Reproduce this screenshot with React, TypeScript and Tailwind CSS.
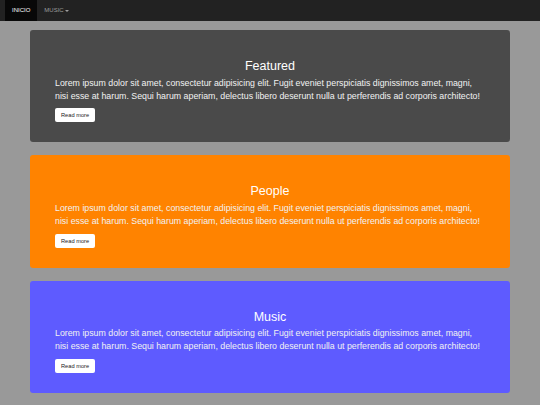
interface PanelProps {
  title: string
  className: string
}

function Panel({ title, className }: PanelProps) {
  return (
    <section className={`flex flex-col items-start rounded-[3px] px-[25px] pt-[30px] pb-[20px] ${className}`}>
      <h2 className="w-full text-center text-[12.5px] leading-[1.1] text-white">{title}</h2>
      <p className="mt-[3px] whitespace-nowrap text-[8.8px] leading-[13px] text-[#f2f2f2]">
        Lorem ipsum dolor sit amet, consectetur adipisicing elit. Fugit eveniet perspiciatis dignissimos amet, magni,
        <br />
        nisi esse at harum. Sequi harum aperiam, delectus libero deserunt nulla ut perferendis ad corporis architecto!
      </p>
      <button className="mt-[5.5px] block h-[14px] rounded-[2px] bg-white px-[6px] text-[5.7px] leading-[14px] text-[#222]">
        Read more
      </button>
    </section>
  )
}

export default function App() {
  return (
    <div
      className="min-h-[405px] bg-[#999999]"
      style={{ fontFamily: '"Liberation Sans", Arial, sans-serif' }}
    >
      <nav className="flex h-[21px] items-stretch bg-[#222222] pl-[5px]">
        <a className="flex items-center bg-[#080808] px-[7px] text-[6px] text-white">INICIO</a>
        <a className="flex items-center gap-[1.5px] px-[7px] text-[6px] text-[#9d9d9d]">
          MUSIC
          <span className="h-0 w-0 border-x-[2px] border-t-[2.5px] border-x-transparent border-t-[#9d9d9d]" />
        </a>
      </nav>

      <main className="mx-auto flex w-[480px] flex-col gap-[13px] pt-[9px] pb-[12px]">
        <Panel title="Featured" className="bg-[#4a4a4a]" />
        <Panel title="People" className="bg-[#ff8300]" />
        <Panel title="Music" className="bg-[#5e5bff]" />
      </main>
    </div>
  )
}
